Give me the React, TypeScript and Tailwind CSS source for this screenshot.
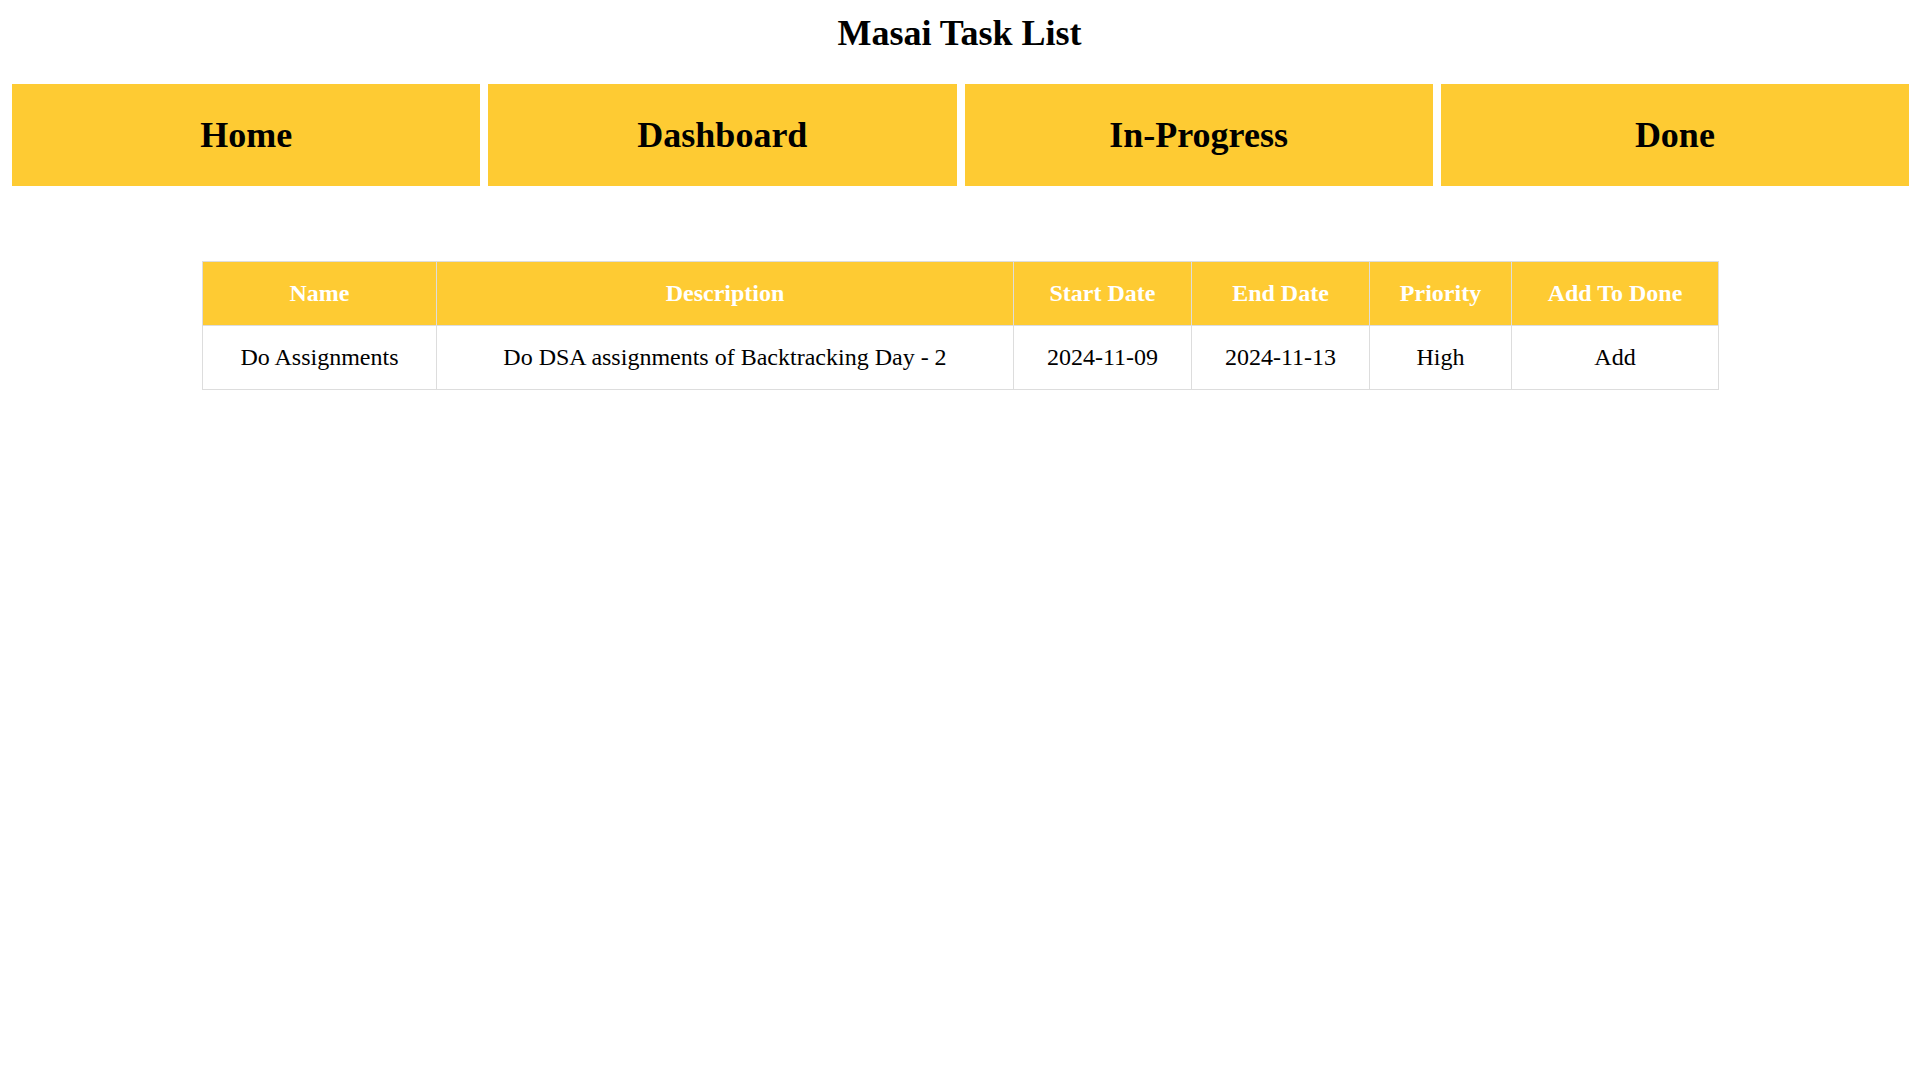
import React from "react";

const navItems = ["Home", "Dashboard", "In-Progress", "Done"];
const headers = ["Name", "Description", "Start Date", "End Date", "Priority", "Add To Done"];
const row = ["Do Assignments", "Do DSA assignments of Backtracking Day - 2", "2024-11-09", "2024-11-13", "High", "Add"];
const widths = ["w-[234px]", "w-[577px]", "w-[178px]", "w-[178px]", "w-[142px]", "w-[207px]"];

export default function App() {
  return (
    <div className="min-h-screen bg-white pt-[13px] font-['Liberation_Serif',serif] text-black">
      <h1 className="h-[40px] text-center text-[36px] font-bold leading-[40px]">Masai Task List</h1>
      <nav className="mt-[31px] grid grid-cols-4 gap-[8px] pl-[12px] pr-[10px]">
        {navItems.map((n) => (
          <div key={n} className="flex h-[102px] items-center justify-center bg-[#fecb33] text-[36px] font-bold">
            {n}
          </div>
        ))}
      </nav>
      <div className="mt-[75px] flex justify-center pl-[2px]">
        <table className="w-[1516px] table-fixed border-collapse text-[24px]">
          <colgroup>
            {widths.map((w, i) => (
              <col key={i} className={w} />
            ))}
          </colgroup>
          <thead>
            <tr className="h-[64px] bg-[#fecb33]">
              {headers.map((h) => (
                <th key={h} className="border border-[#dddddd] p-0 pb-[2px] text-center font-bold text-white">
                  {h}
                </th>
              ))}
            </tr>
          </thead>
          <tbody>
            <tr className="h-[64px]">
              {row.map((c, i) => (
                <td key={i} className="border border-[#dddddd] p-0 pb-[2px] text-center font-normal">
                  {c}
                </td>
              ))}
            </tr>
          </tbody>
        </table>
      </div>
    </div>
  );
}
